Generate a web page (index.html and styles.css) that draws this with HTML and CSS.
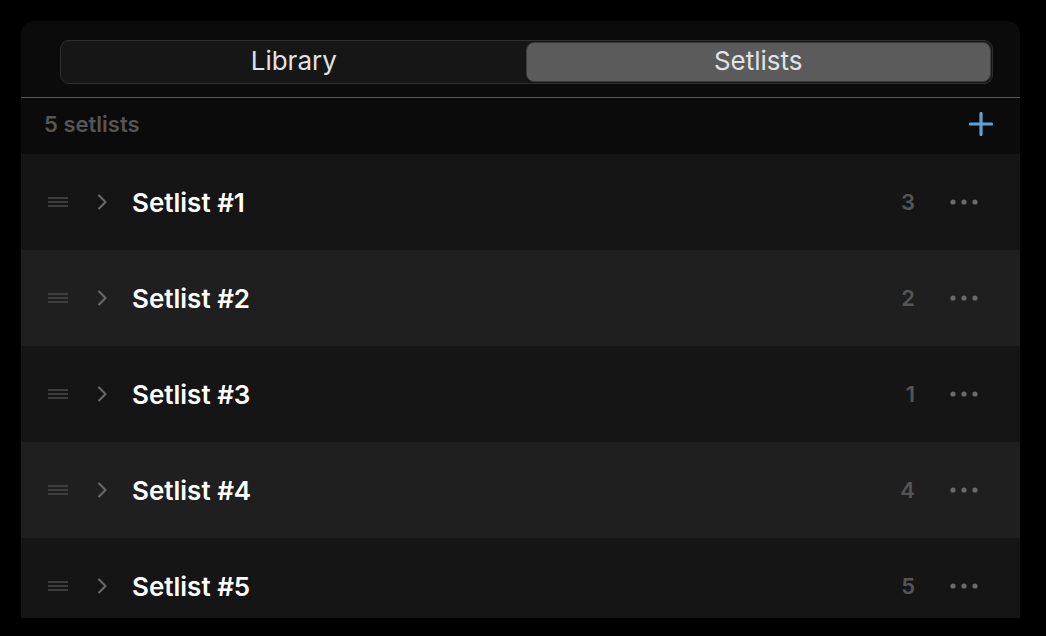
FILE: index.html
```html
<!DOCTYPE html>
<html>
<head>
<meta charset="utf-8">
<link rel="stylesheet" href="styles.css">
</head>
<body>
<div class="panel">
  <div class="top">
    <div class="segmented">
      <div class="seg">Library</div>
      <div class="seg seg-active">Setlists</div>
    </div>
  </div>
  <div class="header">
    <span class="count-label">5 setlists</span>
    <svg class="plus" width="24" height="24" viewBox="0 0 24 24"><path d="M12 1.5V22.5M1.5 12H22.5" stroke="#5aa3d4" stroke-width="3.2" stroke-linecap="round"/></svg>
  </div>
  <div class="list">
    <div class="row row-odd">
      <svg class="handle" width="20" height="10" viewBox="0 0 20 10"><path d="M0 1H20M0 5H20M0 9H20" stroke="#4a4a4a" stroke-width="1.4"/></svg>
      <svg class="chev" width="12" height="16" viewBox="0 0 12 16"><path d="M3 1.5L9.5 8L3 14.5" fill="none" stroke="#6a6a6a" stroke-width="2" stroke-linecap="round" stroke-linejoin="round"/></svg>
      <span class="name">Setlist #1</span>
      <span class="num">3</span>
      <svg class="more" width="28" height="6" viewBox="0 0 28 6"><circle cx="3" cy="3" r="2.6" fill="#6a6a6a"/><circle cx="14" cy="3" r="2.6" fill="#6a6a6a"/><circle cx="25" cy="3" r="2.6" fill="#6a6a6a"/></svg>
    </div>
    <div class="row row-even">
      <svg class="handle" width="20" height="10" viewBox="0 0 20 10"><path d="M0 1H20M0 5H20M0 9H20" stroke="#4a4a4a" stroke-width="1.4"/></svg>
      <svg class="chev" width="12" height="16" viewBox="0 0 12 16"><path d="M3 1.5L9.5 8L3 14.5" fill="none" stroke="#6a6a6a" stroke-width="2" stroke-linecap="round" stroke-linejoin="round"/></svg>
      <span class="name">Setlist #2</span>
      <span class="num">2</span>
      <svg class="more" width="28" height="6" viewBox="0 0 28 6"><circle cx="3" cy="3" r="2.6" fill="#6a6a6a"/><circle cx="14" cy="3" r="2.6" fill="#6a6a6a"/><circle cx="25" cy="3" r="2.6" fill="#6a6a6a"/></svg>
    </div>
    <div class="row row-odd">
      <svg class="handle" width="20" height="10" viewBox="0 0 20 10"><path d="M0 1H20M0 5H20M0 9H20" stroke="#4a4a4a" stroke-width="1.4"/></svg>
      <svg class="chev" width="12" height="16" viewBox="0 0 12 16"><path d="M3 1.5L9.5 8L3 14.5" fill="none" stroke="#6a6a6a" stroke-width="2" stroke-linecap="round" stroke-linejoin="round"/></svg>
      <span class="name">Setlist #3</span>
      <span class="num">1</span>
      <svg class="more" width="28" height="6" viewBox="0 0 28 6"><circle cx="3" cy="3" r="2.6" fill="#6a6a6a"/><circle cx="14" cy="3" r="2.6" fill="#6a6a6a"/><circle cx="25" cy="3" r="2.6" fill="#6a6a6a"/></svg>
    </div>
    <div class="row row-even">
      <svg class="handle" width="20" height="10" viewBox="0 0 20 10"><path d="M0 1H20M0 5H20M0 9H20" stroke="#4a4a4a" stroke-width="1.4"/></svg>
      <svg class="chev" width="12" height="16" viewBox="0 0 12 16"><path d="M3 1.5L9.5 8L3 14.5" fill="none" stroke="#6a6a6a" stroke-width="2" stroke-linecap="round" stroke-linejoin="round"/></svg>
      <span class="name">Setlist #4</span>
      <span class="num">4</span>
      <svg class="more" width="28" height="6" viewBox="0 0 28 6"><circle cx="3" cy="3" r="2.6" fill="#6a6a6a"/><circle cx="14" cy="3" r="2.6" fill="#6a6a6a"/><circle cx="25" cy="3" r="2.6" fill="#6a6a6a"/></svg>
    </div>
    <div class="row row-odd">
      <svg class="handle" width="20" height="10" viewBox="0 0 20 10"><path d="M0 1H20M0 5H20M0 9H20" stroke="#4a4a4a" stroke-width="1.4"/></svg>
      <svg class="chev" width="12" height="16" viewBox="0 0 12 16"><path d="M3 1.5L9.5 8L3 14.5" fill="none" stroke="#6a6a6a" stroke-width="2" stroke-linecap="round" stroke-linejoin="round"/></svg>
      <span class="name">Setlist #5</span>
      <span class="num">5</span>
      <svg class="more" width="28" height="6" viewBox="0 0 28 6"><circle cx="3" cy="3" r="2.6" fill="#6a6a6a"/><circle cx="14" cy="3" r="2.6" fill="#6a6a6a"/><circle cx="25" cy="3" r="2.6" fill="#6a6a6a"/></svg>
    </div>
  </div>
</div>
</body>
</html>
```
FILE: styles.css
```css
* { box-sizing: border-box; }
html, body { margin: 0; padding: 0; background: #000; }
body {
  width: 1046px;
  height: 636px;
  overflow: hidden;
  padding: 21px 26px 0 21px;
  font-family: Inter, "Liberation Sans", sans-serif;
}
.panel {
  width: 999px;
  height: 597px;
  background: #0b0b0b;
  border-radius: 13px 13px 0 0;
  overflow: hidden;
  display: flex;
  flex-direction: column;
}
.top {
  height: 77px;
  padding: 19px 27px 0 39px;
  border-bottom: 1px solid #5a5a5a;
  flex-shrink: 0;
}
.segmented {
  display: flex;
  height: 44px;
  background: #161616;
  border: 1px solid #303030;
  border-radius: 9px;
  padding: 1px;
}
.seg {
  flex: 1;
  display: flex;
  align-items: center;
  justify-content: center;
  color: #e2e2e2;
  font-size: 26px;
  font-weight: 400;
  border-radius: 8px;
  padding-bottom: 3px;
}
.seg-active {
  background: #5b5b5b;
  border: 1px solid #3a3a3a;
}
.header {
  height: 56px;
  flex-shrink: 0;
  display: flex;
  align-items: center;
  justify-content: space-between;
  padding: 0 27px 4px 23px;
}
.count-label {
  color: #555;
  font-size: 22px;
  font-weight: 600;
}
.plus { display: block; }
.list { display: flex; flex-direction: column; }
.row {
  height: 96px;
  flex-shrink: 0;
  display: flex;
  align-items: center;
  padding: 0 42px 0 27px;
}
.row-odd { background: #151515; }
.row-even { background: #1f1f1f; }
.handle { display: block; flex-shrink: 0; }
.chev { display: block; flex-shrink: 0; margin-left: 28px; }
.name {
  margin-left: 24px;
  color: #fff;
  font-size: 26px;
  font-weight: 600;
  flex: 1;
}
.num {
  color: #555;
  font-size: 22px;
  font-weight: 600;
  margin-right: 35px;
}
.more { display: block; flex-shrink: 0; }
```
